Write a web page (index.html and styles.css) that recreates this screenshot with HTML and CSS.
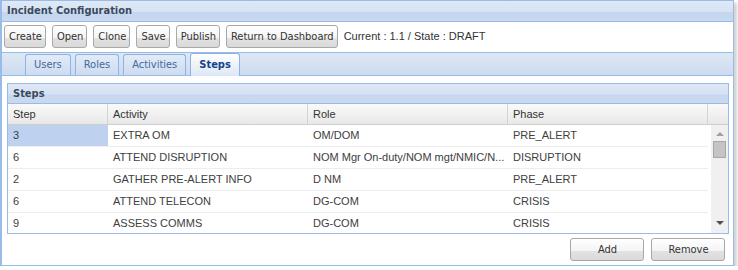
FILE: index.html
```html
<!DOCTYPE html>
<html lang="en">
<head>
  <meta charset="UTF-8">
  <title>Incident Configuration</title>
  <link rel="stylesheet" href="styles.css">
</head>
<body>
  <div class="panel">
    <div class="panel-header">Incident Configuration</div>

    <div class="toolbar">
      <button class="btn">Create</button>
      <button class="btn">Open</button>
      <button class="btn">Clone</button>
      <button class="btn">Save</button>
      <button class="btn">Publish</button>
      <button class="btn">Return to Dashboard</button>
      <span class="current">Current : 1.1 / State : DRAFT</span>
    </div>

    <div class="tabbar">
      <div class="tab">Users</div>
      <div class="tab">Roles</div>
      <div class="tab">Activities</div>
      <div class="tab active">Steps</div>
    </div>

    <div class="tab-body">
      <div class="grid">
        <div class="grid-title">Steps</div>
        <div class="grid-head">
          <div class="col col-step">Step</div>
          <div class="col col-wide">Activity</div>
          <div class="col col-wide">Role</div>
          <div class="col col-wide">Phase</div>
          <div class="col col-spacer"></div>
        </div>
        <div class="grid-body">
          <div class="rows">
            <div class="row">
              <div class="cell col-step selected">3</div>
              <div class="cell col-wide">EXTRA OM</div>
              <div class="cell col-wide">OM/DOM</div>
              <div class="cell col-wide">PRE_ALERT</div>
            </div>
            <div class="row">
              <div class="cell col-step">6</div>
              <div class="cell col-wide">ATTEND DISRUPTION</div>
              <div class="cell col-wide">NOM Mgr On-duty/NOM mgt/NMIC/N...</div>
              <div class="cell col-wide">DISRUPTION</div>
            </div>
            <div class="row">
              <div class="cell col-step">2</div>
              <div class="cell col-wide">GATHER PRE-ALERT INFO</div>
              <div class="cell col-wide">D NM</div>
              <div class="cell col-wide">PRE_ALERT</div>
            </div>
            <div class="row">
              <div class="cell col-step">6</div>
              <div class="cell col-wide">ATTEND TELECON</div>
              <div class="cell col-wide">DG-COM</div>
              <div class="cell col-wide">CRISIS</div>
            </div>
            <div class="row">
              <div class="cell col-step">9</div>
              <div class="cell col-wide">ASSESS COMMS</div>
              <div class="cell col-wide">DG-COM</div>
              <div class="cell col-wide">CRISIS</div>
            </div>
          </div>
          <div class="scrollbar">
            <span class="arrow-up"></span>
            <span class="thumb"></span>
            <span class="spacer"></span>
            <span class="arrow-down"></span>
          </div>
        </div>
      </div>

      <div class="actions">
        <button class="btn btn-wide">Add</button>
        <button class="btn btn-wide">Remove</button>
      </div>
    </div>
  </div>
</body>
</html>
```

FILE: styles.css
```css
body {
  margin: 0;
  background-color: #FFFFFF;
  font-family: "DejaVu Sans Condensed", "DejaVu Sans", sans-serif;
  font-stretch: condensed;
  font-size: 11px;
  color: #333333;
}

.panel {
  width: 734px;
  height: 266px;
  box-sizing: border-box;
  border: 1px solid #99BBE8;
  border-left: 2px solid #99BBE8;
  box-shadow: 3px 3px 3px rgba(0, 0, 0, 0.18);
  display: flex;
  flex-direction: column;
}

.panel-header {
  height: 20px;
  line-height: 20px;
  padding-left: 5px;
  font-weight: bold;
  color: #3A4A5E;
  background: linear-gradient(#E0E9F6 0, #D6E2F3 55%, #C4D6EF 56%, #C8D9F0 100%);
  border-bottom: 1px solid #99BBE8;
}

/* Toolbar */
.toolbar {
  height: 30px;
  box-sizing: border-box;
  padding: 3px 2px 0;
  display: flex;
  align-items: flex-start;
  gap: 6px;
  background-color: #FFFFFF;
}

.btn {
  height: 23px;
  padding: 0 3px 0 4px;
  border: 1px solid #A8A8A8;
  border-radius: 3px;
  font-family: inherit;
  font-stretch: condensed;
  font-size: 11px;
  color: #333333;
  background: linear-gradient(#FFFFFF 0, #F4F4F4 55%, #E2E2E2 56%, #DADADA 100%);
  cursor: pointer;
}

.current {
  font-family: "Liberation Sans", Arial, sans-serif;
  font-size: 11px;
  line-height: 23px;
  color: #333333;
}

/* Tabs */
.tabbar {
  height: 24px;
  box-sizing: border-box;
  padding: 2px 0 0 23px;
  display: flex;
  align-items: flex-end;
  gap: 4px;
  border-top: 1px solid #99BBE8;
  border-bottom: 1px solid #99BBE8;
  background: linear-gradient(#DEE8F5, #CCDBF0);
}

.tab {
  height: 21px;
  line-height: 20px;
  box-sizing: border-box;
  padding: 0 8px;
  border: 1px solid #8DB2E3;
  border-bottom: none;
  border-radius: 3px 3px 0 0;
  color: #4468A0;
  background: linear-gradient(#E3EBF7, #CDDCF1);
  cursor: pointer;
}

.tab.active {
  height: 23px;
  margin-bottom: -1px;
  line-height: 22px;
  font-weight: bold;
  color: #15428B;
  background: linear-gradient(#FFFFFF, #DCE7F6);
}

/* Content */
.tab-body {
  flex: 1;
  padding: 7px 4px 0 5px;
  background-color: #FFFFFF;
}

.grid {
  border: 1px solid #99BBE8;
}

.grid-title {
  height: 19px;
  line-height: 19px;
  padding-left: 5px;
  font-weight: bold;
  color: #3A4A5E;
  background: linear-gradient(#DFE8F6 0, #D4E1F3 55%, #C5D7EF 56%, #CAD9F0 100%);
  border-bottom: 1px solid #99BBE8;
}

.grid-head {
  display: flex;
  height: 20px;
  border-bottom: 1px solid #CFCFCF;
  background: linear-gradient(#FAFAFA, #E8E8E8);
  font-family: "Liberation Sans", Arial, sans-serif;
}

.col {
  box-sizing: border-box;
  padding-left: 5px;
  line-height: 20px;
  border-right: 1px solid #D3D3D3;
  color: #333333;
}

.col-step {
  width: 100px;
}

.col-wide {
  width: 200px;
}

.col-spacer {
  flex: 1;
  border-right: none;
}

.grid-body {
  display: flex;
  height: 108px;
  overflow: hidden;
}

.rows {
  width: 700px;
  font-family: "Liberation Sans", Arial, sans-serif;
}

.row {
  display: flex;
  height: 22px;
  box-sizing: border-box;
  border-bottom: 1px solid #EDEDED;
}

.cell {
  box-sizing: border-box;
  padding: 0 1px 0 5px;
  line-height: 21px;
  color: #404040;
  white-space: nowrap;
  overflow: hidden;
  text-overflow: ellipsis;
}

.cell.selected {
  background-color: #BED2EF;
}

/* Scrollbar */
.scrollbar {
  width: 17px;
  margin-left: 3px;
  display: flex;
  flex-direction: column;
  align-items: center;
  padding: 7px 0 8px;
  box-sizing: border-box;
  background-color: #F0F0F0;
}

.arrow-up {
  width: 0;
  height: 0;
  border-left: 4px solid transparent;
  border-right: 4px solid transparent;
  border-bottom: 4px solid #A0A0A0;
}

.thumb {
  width: 13px;
  height: 17px;
  margin-top: 5px;
  box-sizing: border-box;
  border: 1px solid #A8A8A8;
  background-color: #C4C4C4;
}

.spacer {
  flex: 1;
}

.arrow-down {
  width: 0;
  height: 0;
  border-left: 4px solid transparent;
  border-right: 4px solid transparent;
  border-top: 4px solid #505050;
}

.actions {
  display: flex;
  justify-content: flex-end;
  gap: 7px;
  padding: 4px 4px 0 0;
}

.btn-wide {
  width: 74px;
}
```
